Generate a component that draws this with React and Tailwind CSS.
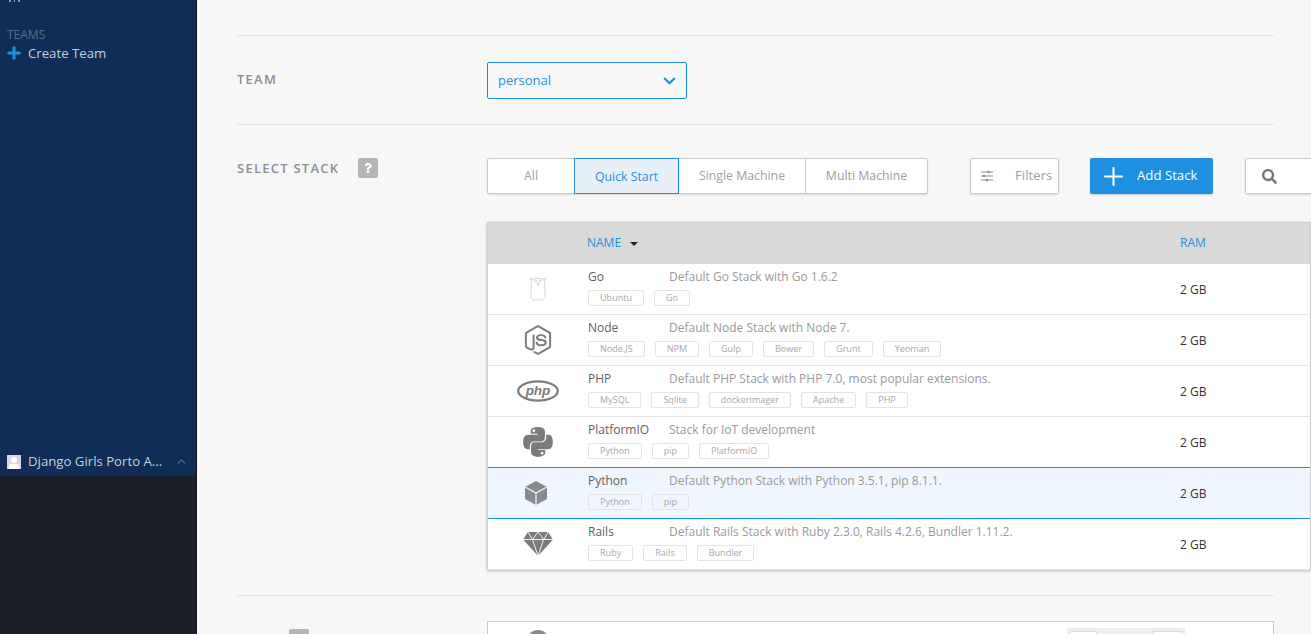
import { Plus, ChevronUp } from "lucide-react";
import { FaNodeJs, FaPython, FaSearch, FaQuestion, FaUser } from "react-icons/fa";

const stacks = [
  { name: "Go", desc: "Default Go Stack with Go 1.6.2", tags: ["Ubuntu", "Go"], icon: "go" },
  { name: "Node", desc: "Default Node Stack with Node 7.", tags: ["Node.JS", "NPM", "Gulp", "Bower", "Grunt", "Yeoman"], icon: "node" },
  { name: "PHP", desc: "Default PHP Stack with PHP 7.0, most popular extensions.", tags: ["MySQL", "Sqlite", "dockerimager", "Apache", "PHP"], icon: "php" },
  { name: "PlatformIO", desc: "Stack for IoT development", tags: ["Python", "pip", "PlatformIO"], icon: "python" },
  { name: "Python", desc: "Default Python Stack with Python 3.5.1, pip 8.1.1.", tags: ["Python", "pip"], icon: "cube", selected: true },
  { name: "Rails", desc: "Default Rails Stack with Ruby 2.3.0, Rails 4.2.6, Bundler 1.11.2.", tags: ["Ruby", "Rails", "Bundler"], icon: "gem" },
];

function Gopher() {
  return (
    <svg viewBox="0 0 18 26" className="w-[18px] h-[26px]" fill="none" stroke="#c8c8c8" strokeWidth="0.7">
      <path d="M2.500 5C2.500 1.500 15.500 1.500 15.500 5l.6 16c-.2 4-13.800 4-14.200 0z" />
      <circle cx="2" cy="3" r="1" />
      <circle cx="16" cy="3" r="1" />
      <circle cx="6.800" cy="5" r="1.100" />
      <circle cx="11" cy="5" r="1.100" />
      <path d="M8.200 7.200h1.600v1.800H8.200z" />
      <path d="M1.900 12l-1 1M16.100 12l1 1M5 24.500l-1 1M13 24.500l1 1" />
    </svg>
  );
}

function PhpIcon() {
  return (
    <svg viewBox="0 0 42 22" className="w-[42px] h-[22px]">
      <ellipse cx="21" cy="11" rx="19.800" ry="9.600" fill="none" stroke="#7b7b7b" strokeWidth="2.200" />
      <text x="21" y="15" textAnchor="middle" fill="#7b7b7b" fontSize="13.500" fontWeight="700" fontStyle="italic" fontFamily="Liberation Sans, sans-serif">php</text>
    </svg>
  );
}

function CubeIcon() {
  return (
    <svg viewBox="0 0 24 26" className="w-[24px] h-[26px] -ml-[5px]">
      <path d="M12 1l11 6v12l-11 6-11-6V7z" fill="#86898d" />
      <path d="M1 7l11 6 11-6M12 13v12" fill="none" stroke="#f0f6fd" strokeWidth="1.200" />
    </svg>
  );
}

function GemIcon() {
  return (
    <svg viewBox="0 0 30 24" className="w-[30px] h-[24px] -mt-[1px]">
      <path d="M5 0h20l5 7.500L15 24 0 7.500z" fill="#7b7b7b" />
      <path d="M0 7.500h30M5 0l4.500 7.500L15 0l6 7.500L25 0M9.500 7.500L15 24l5.500-16.500" fill="none" stroke="#fff" strokeWidth="0.900" />
    </svg>
  );
}

function StackIcon({ type }) {
  if (type === "go") return <Gopher />;
  if (type === "node") return <FaNodeJs className="w-[30px] h-[30px] text-[#7b7b7b]" />;
  if (type === "php") return <PhpIcon />;
  if (type === "python") return <FaPython className="w-[34px] h-[34px] text-[#7b7b7b]" />;
  if (type === "cube") return <CubeIcon />;
  return <GemIcon />;
}

function FiltersIcon() {
  return (
    <svg viewBox="0 0 12 12" className="w-3 h-3" fill="none" stroke="#8a8a8a" strokeWidth="1">
      <path d="M0 2h12M0 6h12M0 10h12" />
      <rect x="6.500" y="0.800" width="2" height="2.400" fill="#8a8a8a" stroke="none" />
      <rect x="2" y="4.800" width="2" height="2.400" fill="#8a8a8a" stroke="none" />
      <rect x="5" y="8.800" width="2" height="2.400" fill="#8a8a8a" stroke="none" />
    </svg>
  );
}

function StackRow({ stack }) {
  return (
    <div
      className={
        "flex h-[51px] border-b " +
        (stack.selected ? "bg-[#f0f6fd] border-[#1e90e0] border-t -mt-px h-[52px] relative" : "bg-white border-[#e4e4e4]")
      }
    >
      <div className="w-[100px] shrink-0 flex items-center justify-center"><StackIcon type={stack.icon} /></div>
      <div className="w-[592px] shrink-0 pt-[4px]">
        <div className="flex text-[12px] leading-[18px]">
          <span className="w-[81px] shrink-0 text-[#5f5f5f]">{stack.name}</span>
          <span className="text-[#9a9a9a]">{stack.desc}</span>
        </div>
        <div className="flex gap-[10px] mt-[4px]">
          {stack.tags.map((tag) => (
            <span key={tag} className="h-[16px] px-[11px] flex items-center border border-[#e4e4e4] rounded-[2px] text-[9.05px] text-[#a8a8a8]">
              {tag}
            </span>
          ))}
        </div>
      </div>
      <div className="flex items-center pt-[1px] text-[12px] text-[#333]">2 GB</div>
    </div>
  );
}

export default function App() {
  return (
    <div className="flex h-[634px] overflow-hidden bg-[#f7f7f7] font-['Open_Sans',sans-serif]">
      <aside className="w-[197px] shrink-0 flex flex-col border-r border-[#111]">
        <div className="h-[476px] bg-[#0f2d57] flex flex-col justify-between">
          <div className="pl-[7px]">
            {/* bottom edge of the menu icon scrolled off above */}
            <svg viewBox="0 0 13 2" className="ml-[1px] w-[13px] h-[2px]" fill="#8f9bad">
              <path d="M1 0h2v2H1zM6 0h1v2H6zM10 0h2v2h-2z" />
            </svg>
            <div className="mt-[25px] text-[12px] leading-[16px] text-[#5d6b82]">TEAMS</div>
            <div className="flex items-center gap-[5px] -ml-[2px] text-[13.2px] leading-[20px] text-[#c5d0de]">
              <Plus className="w-[18px] h-[18px] text-[#1e90e0]" strokeWidth={4} />
              Create Team
            </div>
          </div>
          <div className="flex items-center h-[30px] pt-[1px] pl-[7px] text-[13.2px] text-[#c5d0de]">
            <span className="w-[14px] h-[14px] bg-[#d8d8d8] flex items-end justify-center overflow-hidden shrink-0">
              <FaUser className="w-[12px] h-[12px] text-white" />
            </span>
            <span className="ml-[7px] w-[140px] shrink-0 truncate">Django Girls Porto A...</span>
            <ChevronUp className="ml-[7px] w-[13px] h-[13px] text-[#5d6b82]" />
          </div>
        </div>
        <div className="flex-1 bg-[#1b1f27]" />
      </aside>

      <main className="flex-1 min-w-0 pl-[40px] pr-[37px] pt-[35px]">
        <section className="flex h-[90px] border-y border-[#e4e4e4] pt-[26px]">
          <div className="w-[250px] shrink-0 pt-[7px] text-[13px] leading-[20px] font-semibold tracking-[1.25px] text-[#8a8f96]">TEAM</div>
          <div className="w-[200px] h-[37px] flex items-center justify-between px-[10px] border border-[#1e90e0] rounded-[2px] text-[13px] text-[#1e90e0]">
            personal
            <svg viewBox="0 0 14 9" className="w-[13px] h-[8px]" fill="none" stroke="#1e90e0" strokeWidth="2.400">
              <path d="M1 1l6 6 6-6" />
            </svg>
          </div>
        </section>

        <section className="flex h-[471px] border-b border-[#e4e4e4] pt-[33px]">
          <div className="w-[250px] shrink-0 flex items-start">
            <span className="text-[13px] leading-[20px] font-semibold tracking-[1.25px] text-[#8a8f96]">SELECT STACK</span>
            <span className="ml-[19px] w-[20px] h-[20px] rounded-[2px] bg-[#b5b5b5] flex items-center justify-center">
              <FaQuestion className="w-[10px] h-[10px] text-white" />
            </span>
          </div>
          <div className="w-[824px] shrink-0">
            <div className="flex h-[36px]">
              <div className="flex w-[441px] shrink-0 bg-white border border-[#c9c9c9] rounded-[2px] shadow-[0_1px_2px_rgba(0,0,0,0.12)] text-[12.3px] text-[#a0a0a0]">
                <span className="w-[86px] flex items-center justify-center">All</span>
                <span className="w-[105px] -my-px pt-[2px] flex items-center justify-center bg-[#e9eff7] border border-[#1e90e0] text-[#1e90e0]">Quick Start</span>
                <span className="w-[127px] flex items-center justify-center border-r border-[#c9c9c9]">Single Machine</span>
                <span className="flex-1 flex items-center justify-center">Multi Machine</span>
              </div>
              <div className="ml-[42px] w-[89px] shrink-0 flex items-center pl-[10px] bg-white border border-[#c9c9c9] rounded-[2px] shadow-[0_1px_2px_rgba(0,0,0,0.12)] text-[13.2px] text-[#a0a0a0]">
                <FiltersIcon />
                <span className="ml-[22px]">Filters</span>
              </div>
              <div className="ml-[31px] w-[123px] shrink-0 flex items-center pl-[9px] bg-[#1e90e0] rounded-[2px] shadow-[0_1px_2px_rgba(0,0,0,0.2)] text-[13.2px] text-white">
                <Plus className="w-[29px] h-[29px]" strokeWidth={1.7} />
                <span className="ml-[9px]">Add Stack</span>
              </div>
              <div className="ml-[32px] w-[120px] shrink-0 flex items-center pl-[16px] bg-white border border-[#c9c9c9] rounded-[2px] shadow-[0_1px_2px_rgba(0,0,0,0.12)]">
                <FaSearch className="w-[15px] h-[15px] text-[#777]" />
              </div>
            </div>

            <div className="mt-[28px] border border-[#d0d0d0] border-b-0 shadow-[0_1px_3px_rgba(0,0,0,0.25)]">
              <div className="flex items-center h-[41px] pb-[2px] bg-[#d9d9d9] text-[12px] text-[#1e90e0]">
                <span className="w-[99px]" />
                <span className="w-[593px] flex items-center">
                  NAME
                  <span className="ml-[9px] mt-[2px] w-0 h-0 border-x-[4px] border-x-transparent border-t-[4px] border-t-[#222]" />
                </span>
                <span>RAM</span>
              </div>
              {stacks.map((stack) => (
                <StackRow key={stack.name} stack={stack} />
              ))}
            </div>
          </div>
        </section>

        <section className="flex pt-[25px]">
          <div className="w-[250px] shrink-0 pt-[8px] pl-[52px]">
            <div className="w-[20px] h-[20px] rounded-[2px] bg-[#b5b5b5]" />
          </div>
          <div className="flex-1 min-w-0 h-[60px] flex bg-white border border-[#c9c9c9]">
            <div className="mt-[8px] ml-[39px] w-[22px] h-[22px] rounded-full bg-[#8a8a8a]" />
            <div className="mt-[6px] ml-[518px] w-[118px] h-[30px] bg-[#eeeeee] flex justify-between px-[3px] pt-[3px]">
              <div className="w-[27px] h-[24px] bg-white border border-[#ddd]" />
              <div className="w-[29px] h-[24px] bg-white border border-[#ddd]" />
            </div>
          </div>
        </section>
      </main>
    </div>
  );
}
